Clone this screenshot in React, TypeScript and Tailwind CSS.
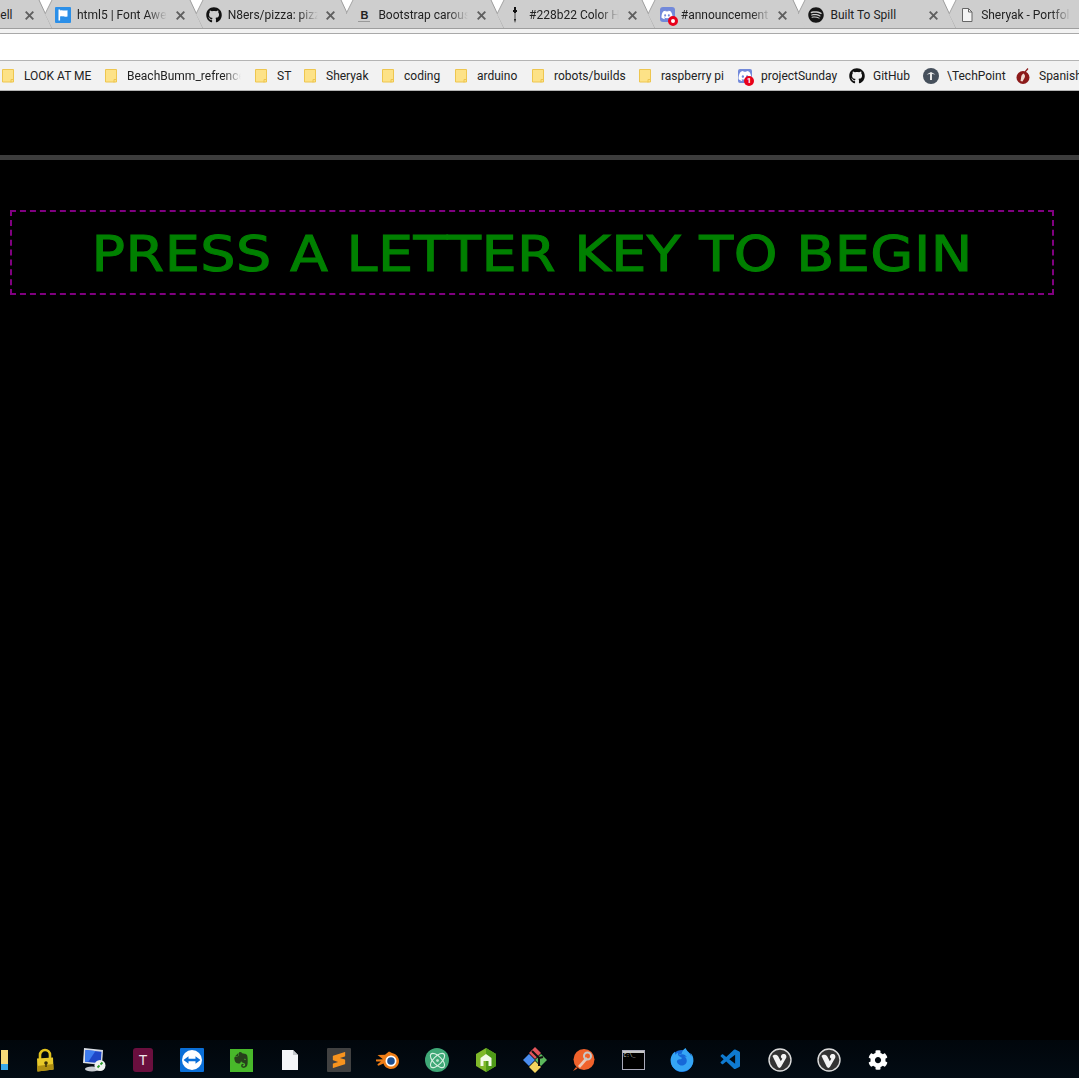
import React from "react";
import { FaGithub, FaSpotify, FaDiscord, FaEvernote, FaFirefoxBrowser, FaCog } from "react-icons/fa";
import { SiSublimetext } from "react-icons/si";
import { VscVscode } from "react-icons/vsc";
import { Atom } from "lucide-react";

const font = "font-['Roboto','Noto_Sans',sans-serif]";

function FlagIcon() {
  return (
    <svg width="16" height="16" viewBox="0 0 16 16">
      <rect width="16" height="16" rx="1" fill="#2b8fe8" />
      <path d="M3.500 2.500v11h1.600V9.600c2-1 3.500 .7 7.400-.2V3.200c-3.400 1-5.200-.7-7.400 .2V2.500z" fill="#fff" />
    </svg>
  );
}
function BootstrapIcon() {
  return (
    <span className="flex h-[16px] w-[16px] flex-col items-center justify-center">
      <span className="text-[11px] font-bold leading-[12px] text-[#222] font-['Liberation_Sans',sans-serif]">B</span>
      <span className="h-[1px] w-[12px] bg-[#999]" />
    </span>
  );
}
function DropperIcon() {
  return (
    <svg width="16" height="18" viewBox="0 0 16 18">
      <path d="M7 1h2v3h1v2H9v7l-1 4-1-4V6H6V4h1z" fill="#111" />
      <path d="M7.400 7h1.200v6H7.400z" fill="#ddd" />
    </svg>
  );
}
function DiscordRed() {
  return (
    <span className="relative left-[2px] block h-[16px] w-[16px]">
      <span className="flex h-[15px] w-[15px] items-center justify-center rounded-[3px] bg-[#7289da]">
        <FaDiscord className="h-[12px] w-[12px] text-white" />
      </span>
      <span className="absolute bottom-[-3px] right-[-2px] h-[10px] w-[10px] rounded-full border-[3px] border-[#e8001a] bg-white" />
    </span>
  );
}
function DocIcon() {
  return (
    <svg width="14" height="16" viewBox="0 0 14 16" fill="none">
      <path d="M2.500 1.500h6l3.500 3.500v9.500H2.500z" stroke="#666" fill="#f4f4f4" />
      <path d="M8.500 1.500V5H12" stroke="#666" />
    </svg>
  );
}

const tabs = [
  { icon: null, label: "ell", labelClass: "ml-[80px] w-[16px]", fade: false },
  { icon: <FlagIcon />, label: "html5 | Font Awe", labelClass: "ml-[6px] w-[90px]", fade: true },
  { icon: <FaGithub className="h-[16px] w-[16px] text-[#111]" />, label: "N8ers/pizza: pizz", labelClass: "ml-[6px] w-[90px]", fade: true },
  { icon: <BootstrapIcon />, label: "Bootstrap carous", labelClass: "ml-[6px] w-[90px]", fade: true },
  { icon: <DropperIcon />, label: "#228b22 Color H", labelClass: "ml-[6px] w-[90px]", fade: true },
  { icon: <DiscordRed />, label: "#announcement", labelClass: "ml-[7px] w-[90px]", fade: true },
  { icon: <FaSpotify className="h-[16px] w-[16px] text-[#161616]" />, label: "Built To Spill", labelClass: "ml-[6px] w-[90px]", fade: false },
  { icon: <DocIcon />, label: "Sheryak - Portfol", labelClass: "ml-[6px] w-[90px]", fade: true },
];

function Tab({ icon, label, labelClass, fade }: { icon: React.ReactNode; label: string; labelClass: string; fade: boolean }) {
  return (
    <div className="relative mr-[-7px] h-[29px] w-[157.700px] shrink-0">
      <svg className="absolute inset-0" width="158" height="29" viewBox="0 0 158 29">
        <polygon points="7,0 145,0 158,28 7,28 0,14" fill="#cecece" />
        <polyline points="7,0 0,14" fill="none" stroke="#a3a3a3" />
        <polyline points="145,0 158,28" fill="none" stroke="#9c9c9c" />
        <line x1="0" y1="28.500" x2="158" y2="28.500" stroke="#9e9e9e" />
      </svg>
      <div className="relative flex h-[29px] items-center pt-[1px]">
        <span className="ml-[10px] flex w-[16px] shrink-0 items-center justify-center">{icon}</span>
        <span
          className={`whitespace-nowrap text-[12px] leading-[28px] text-[#222] ${labelClass} ${
            fade ? "[mask-image:linear-gradient(to_right,black_78%,transparent)]" : ""
          }`}
        >
          {label}
        </span>
      </div>
      <svg className="absolute left-[130.500px] top-[10.500px]" width="9" height="9" viewBox="0 0 9 9">
        <path d="M.7 .7l7.600 7.600M8.300 .7L.7 8.300" stroke="#5f5f5f" strokeWidth="1.900" />
      </svg>
    </div>
  );
}

function Folder() {
  return (
    <svg width="12" height="14" viewBox="0 0 12 14" className="shrink-0">
      <path d="M.5 .5h11v12.500H.5z" fill="#fde287" stroke="#eec64f" />
      <path d="M9 13.500v-3h3" fill="none" stroke="#eec64f" />
    </svg>
  );
}

const bookmarks = [
  { icon: <Folder />, label: "LOOK AT ME", w: "w-[67px]", fade: false },
  { icon: <Folder />, label: "BeachBumm_refrence", w: "w-[114px]", fade: true },
  { icon: <Folder />, label: "ST", w: "w-[13px]", fade: false },
  { icon: <Folder />, label: "Sheryak", w: "w-[42px]", fade: false },
  { icon: <Folder />, label: "coding", w: "w-[37px]", fade: false },
  { icon: <Folder />, label: "arduino", w: "w-[41px]", fade: false },
  { icon: <Folder />, label: "robots/builds", w: "w-[71px]", fade: false },
  { icon: <Folder />, label: "raspberry pi", w: "w-[63px]", fade: false },
];

function Bookmark({ icon, label, w, fade, iconW, gap }: { icon: React.ReactNode; label: string; w: string; fade?: boolean; iconW: string; gap: string }) {
  return (
    <div className={`flex shrink-0 items-center ${gap}`}>
      <span className={`flex items-center justify-start ${iconW}`}>{icon}</span>
      <span
        className={`whitespace-nowrap text-[12px] leading-[16px] text-[#222] ${w} ${
          fade ? "[mask-image:linear-gradient(to_right,black_85%,transparent)]" : ""
        }`}
      >
        {label}
      </span>
    </div>
  );
}

function Lock() {
  return (
    <svg width="20" height="24" viewBox="0 0 20 24">
      <path d="M5 11V7a5 5 0 0 1 10 0v4" fill="none" stroke="#e2c21c" strokeWidth="2.600" />
      <path d="M2 10.500l16-1 .5 12-16 2z" fill="#e8c92a" />
      <path d="M2 18l16.300-2 .2 5.500-16 2z" fill="#b08f12" />
      <circle cx="11" cy="15" r="1.800" fill="#3a2f08" />
      <rect x="10.300" y="15" width="1.400" height="4" fill="#3a2f08" />
    </svg>
  );
}
function Computer() {
  return (
    <svg width="24" height="26" viewBox="0 0 24 26">
      <path d="M2 1l19 2-1 15L1 16z" fill="#d8dde5" />
      <path d="M3.500 3l16 1.700-.8 11.500L3 14.700z" fill="#1f47c8" />
      <path d="M3.500 3l10 1-7 10.400L3 14.700z" fill="#3c7cf0" />
      <ellipse cx="10" cy="22" rx="7" ry="2.500" fill="#c8ccd2" />
      <circle cx="18" cy="18.500" r="5.500" fill="#f0f2f0" />
      <path d="M15.500 20.500l2-2M18.500 17.500l2-2" stroke="#2a9a2a" strokeWidth="1.800" />
    </svg>
  );
}
function TeamViewer() {
  return (
    <svg width="24" height="24" viewBox="0 0 24 24">
      <rect width="24" height="24" rx="1" fill="#0a6fd8" />
      <circle cx="12" cy="12" r="10" fill="#fff" />
      <path d="M3.500 12l5-3.800v2.500h7V8.200l5 3.800-5 3.800v-2.500h-7v2.500z" fill="#0a6fd8" />
    </svg>
  );
}
function FileIcon() {
  return (
    <svg width="16" height="20" viewBox="0 0 16 20">
      <path d="M0 0h11l5 5v15H0z" fill="#f4f6f8" />
      <path d="M11 0l5 5h-5z" fill="#c4c8cc" />
    </svg>
  );
}
function Blender() {
  return (
    <svg width="24" height="20" viewBox="0 0 24 20">
      <path d="M0 9.500l7-.3L1.500 5 9 4.800 13 1.500l3 1.500c4 .8 7 4 7 8 0 4.500-3.700 8-8 8-3.500 0-6.500-2.300-7.500-5.500L3 15.500c-1 .5-2-.5-1.200-1.400L5 11.500 1 11.500c-1.200 0-1.500-1.600-1-2z" fill="#ee7d16" />
      <circle cx="15" cy="11" r="5.500" fill="#fff" />
      <circle cx="15" cy="11" r="3.800" fill="#1c4f92" />
    </svg>
  );
}
function Hexagon() {
  return (
    <svg width="20" height="24" viewBox="0 0 20 24">
      <path d="M10 0l10 6v12l-10 6L0 18V6z" fill="#7fb82a" />
      <path d="M10 0l10 6v12l-10 6z" fill="#4f9a18" />
      <path d="M4.500 18V10L10 6l5.500 4v8h-3v-5h-5v5z" fill="#f2fae8" />
    </svg>
  );
}
function Gitk() {
  return (
    <svg width="26" height="26" viewBox="0 0 26 26">
      <path d="M13 0l6 6-6 6-6-6z" fill="#e2555a" />
      <path d="M7 7l6 6-6 6-6-6z" fill="#4a8df0" />
      <path d="M19 7l6 6-6 6-6-6z" fill="#5cb85c" />
      <path d="M13 14l6 6-6 6-6-6z" fill="#f4d35e" />
      <path d="M10 4l7 7v8M17 11l4-1" fill="none" stroke="#111" strokeWidth="2" />
    </svg>
  );
}
function Postman() {
  return (
    <svg width="24" height="24" viewBox="0 0 24 24">
      <circle cx="12" cy="11.500" r="10.500" fill="#f0622b" />
      <path d="M1 23l3-4 1.500 1.500z" fill="#f0622b" />
      <path d="M6 18l8-9 2 2-8 9z" fill="#e8c9b8" />
      <circle cx="15.500" cy="8" r="3.500" fill="none" stroke="#c8c8c8" strokeWidth="2" />
    </svg>
  );
}
function Cmd() {
  return (
    <div className="flex h-[20px] w-[23px] flex-col border border-[#aab] bg-black">
      <span className="h-[2px] w-full bg-[#c8c8c8]" />
      <span className="pl-[1px] text-[5px] leading-[7px] text-[#ddd] font-['Liberation_Mono',monospace]">C:\_</span>
    </div>
  );
}
function Firefox() {
  return (
    <span className="relative flex h-[24px] w-[24px] items-center justify-center">
      <span className="absolute left-[1px] top-[2px] h-[22px] w-[22px] rounded-full bg-[#1668d8]" />
      <FaFirefoxBrowser className="relative h-[24px] w-[24px] text-[#35a5f5]" />
    </span>
  );
}
function Vivaldi() {
  return (
    <svg width="24" height="24" viewBox="0 0 24 24">
      <circle cx="12" cy="12" r="11" fill="#333" stroke="#dcdcdc" strokeWidth="1.400" />
      <path d="M4.500 8c1.500-2 4.800-1.500 5.800 .5l2.500 4.800 1.500-2.500c-1.400-.8-1.800-2.400-1-3.600 .8-1.300 2.500-1.700 3.800-.9 1.300 .8 1.700 2.500 1 3.800l-5.200 9c-.7 1.100-2.300 1.100-3 0z" fill="#f4f4f4" />
    </svg>
  );
}

const dock: React.ReactNode[] = [
  <div className="ml-[17px] flex h-[20px] w-[7px] flex-col justify-end bg-[#f5d978]"><span className="h-[6px] bg-[#3aa8e8]" /></div>,
  <Lock />,
  <Computer />,
  <div className="flex h-[24px] w-[20px] items-center justify-center rounded-[3px] bg-[#6a0f3e] text-[14px] text-[#efe6ea] font-['Liberation_Sans',sans-serif]">T</div>,
  <TeamViewer />,
  <div className="flex h-[23px] w-[23px] items-center justify-center bg-[#48b82a]"><FaEvernote className="h-[18px] w-[18px] text-[#27401c]" /></div>,
  <FileIcon />,
  <div className="flex h-[24px] w-[24px] items-center justify-center rounded-[1px] bg-[#414141]"><SiSublimetext className="h-[16px] w-[16px] text-[#f7931e]" /></div>,
  <Blender />,
  <div className="flex h-[24px] w-[24px] items-center justify-center rounded-full bg-[#3fa877]"><Atom className="h-[19px] w-[19px] text-[#d7f0e2]" strokeWidth={1.400} /></div>,
  <Hexagon />,
  <Gitk />,
  <Postman />,
  <Cmd />,
  <Firefox />,
  <VscVscode className="h-[24px] w-[24px] text-[#0f7ad0]" />,
  <Vivaldi />,
  <Vivaldi />,
  <FaCog className="h-[20px] w-[20px] text-white" />,
];

export default function App() {
  return (
    <div className={`flex h-[1078px] w-[1079px] flex-col overflow-hidden bg-black ${font}`}>
      <div className="flex h-[29px] shrink-0 overflow-hidden bg-white">
        <div className="ml-[-105.700px] flex">
          {tabs.map((t) => (
            <Tab key={t.label} {...t} />
          ))}
        </div>
      </div>
      <div className="h-[5px] shrink-0 border-b border-[#a9a9a9] bg-[#f2f2f2]" />
      <div className="h-[26px] shrink-0 bg-white" />
      <div className="flex h-[31px] shrink-0 items-center gap-[14px] overflow-hidden border-y border-[#b4b4b4] bg-[#f2f2f2] pl-[2px]">
        {bookmarks.map((b) => (
          <Bookmark key={b.label} icon={b.icon} label={b.label} w={b.w} fade={b.fade} iconW="w-[12px]" gap="gap-[10px]" />
        ))}
        <Bookmark
          icon={
            <span className="relative block h-[14px] w-[14px] rounded-[2px] bg-[#7289da]">
              <FaDiscord className="h-[14px] w-[14px] text-white" />
              <span className="absolute bottom-[-3px] right-[-2px] h-[10px] w-[10px] rounded-full bg-[#e8001a] text-center text-[8px] font-bold leading-[10px] text-white">1</span>
            </span>
          }
          label="projectSunday"
          w="w-[74px]"
          iconW="w-[14px]"
          gap="gap-[9px]"
        />
        <Bookmark icon={<FaGithub className="h-[16px] w-[16px] text-[#111]" />} label="GitHub" w="w-[36px]" iconW="w-[16px]" gap="gap-[8px]" />
        <Bookmark
          icon={
            <svg width="16" height="16" viewBox="0 0 16 16">
              <circle cx="8" cy="8" r="8" fill="#46505c" />
              <path d="M3.500 6.500L8 4l4.500 2.500-3.500-.4V12H7V6.100z" fill="#e8e8e8" />
            </svg>
          }
          label="\TechPoint"
          w="w-[55px]"
          iconW="w-[16px]"
          gap="gap-[8px]"
        />
        <Bookmark
          icon={
            <svg width="15" height="16" viewBox="0 0 15 16">
              <circle cx="7" cy="9.500" r="6.500" fill="#8c1a1a" />
              <path d="M4.500 13c1-3 0-6 3-7.500 1.500 1 2 3 1 4.500l-2 3.500z" fill="#f0d8d0" />
              <path d="M9 4l3-3.500" stroke="#8c1a1a" strokeWidth="1.200" />
            </svg>
          }
          label="Spanish"
          w="w-[44px]"
          iconW="w-[15px]"
          gap="gap-[8px]"
        />
      </div>
      <main className="flex-1 bg-black">
        <div className="mt-[64px] h-[5px] bg-[#3c3c3c]" />
        <div className="ml-[10px] mt-[50px] flex h-[85px] w-[1044px] items-center justify-center border-2 border-dashed border-[#800080] pt-[4px]">
          <h1 className="scale-x-[1.135] whitespace-nowrap text-[49px] leading-none tracking-[0.4px] text-[#008000] [-webkit-text-stroke:1px_#008000] font-['DejaVu_Sans',sans-serif]">
            PRESS A LETTER KEY TO BEGIN
          </h1>
        </div>
      </main>
      <div className="flex h-[38px] shrink-0 bg-gradient-to-b from-[#01060b] to-[#030c14]">
        <div className="ml-[-28.500px] flex">
          {dock.map((d, i) => (
            <div key={i} className="flex h-[38px] w-[49px] shrink-0 items-center justify-center pt-[2px]">
              {d}
            </div>
          ))}
        </div>
      </div>
    </div>
  );
}
